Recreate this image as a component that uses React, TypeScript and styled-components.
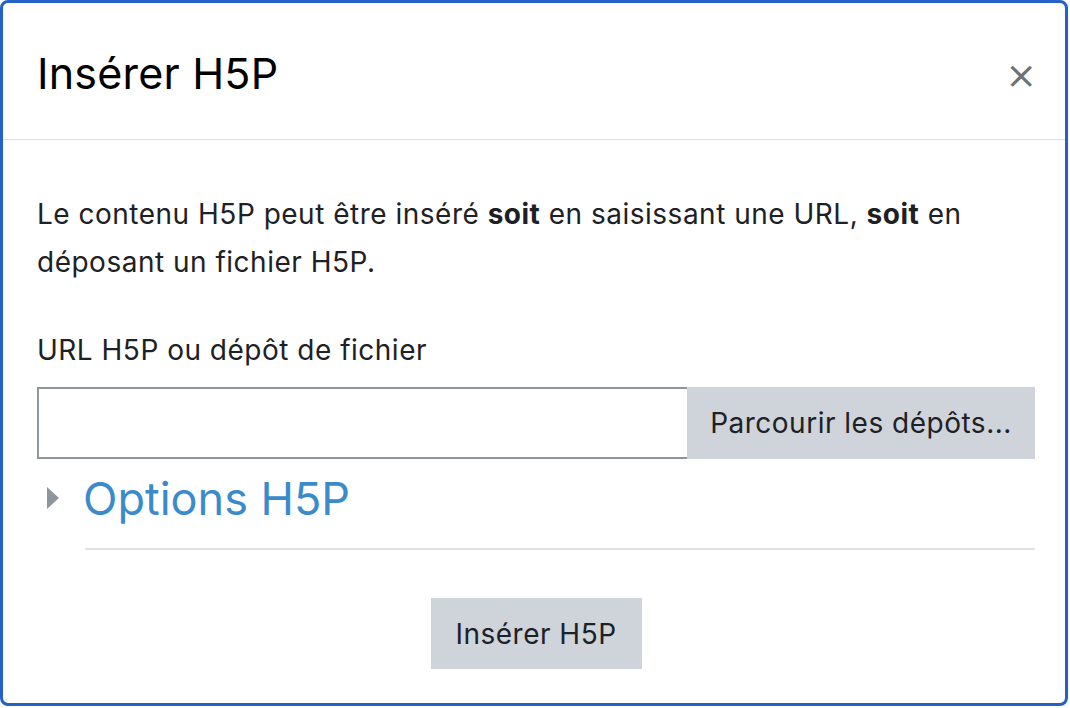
import React from "react";
import styled, { createGlobalStyle } from "styled-components";

const GlobalStyle = createGlobalStyle`
  html, body {
    margin: 0;
    padding: 0;
    background: #fff;
  }
  body {
    font-family: Inter, "Noto Sans", "Liberation Sans", sans-serif;
    color: #1d2125;
  }
  * {
    box-sizing: border-box;
  }
`;

export default function App() {
  return (
    <>
      <GlobalStyle />
      <Modal>
        <Header>
          <Title>Insérer H5P</Title>
          <CloseBtn aria-label="Fermer">×</CloseBtn>
        </Header>
        <Body>
          <Intro>
            Le contenu H5P peut être inséré <b>soit</b> en saisissant une URL,{" "}
            <b>soit</b> en déposant un fichier H5P.
          </Intro>
          <Label>URL H5P ou dépôt de fichier</Label>
          <InputGroup>
            <UrlInput type="text" />
            <GreyButton>Parcourir les dépôts...</GreyButton>
          </InputGroup>
          <OptionsRow>
            <Caret />
            <OptionsLink>Options H5P</OptionsLink>
          </OptionsRow>
          <Divider />
          <Footer>
            <GreyButton $wide>Insérer H5P</GreyButton>
          </Footer>
        </Body>
      </Modal>
    </>
  );
}

const Modal = styled.div`
  width: 1068px;
  height: 706px;
  border: 3px solid #2661c8;
  border-radius: 8px;
  display: flex;
  flex-direction: column;
  background: #fff;
`;

const Header = styled.div`
  height: 137px;
  display: flex;
  align-items: center;
  justify-content: space-between;
  padding: 4px 28px 0 34px;
  border-bottom: 1px solid #dee2e6;
`;

const Title = styled.h5`
  margin: 0;
  font-size: 43px;
  font-weight: 400;
  color: #000;
  letter-spacing: 0.2px;
`;

const CloseBtn = styled.button`
  border: none;
  background: none;
  padding: 0;
  font-family: "DejaVu Sans", sans-serif;
  font-size: 38px;
  line-height: 1;
  color: #6a737b;
  margin-top: 4px;
`;

const Body = styled.div`
  padding: 50px 30px 0 34px;
  display: flex;
  flex-direction: column;
`;

const Intro = styled.p`
  margin: 0;
  font-size: 28px;
  letter-spacing: 0.5px;
  line-height: 48px;
  b {
    font-weight: 700;
  }
`;

const Label = styled.div`
  margin-top: 44px;
  font-size: 28px;
  letter-spacing: 0.5px;
  line-height: 40px;
`;

const InputGroup = styled.div`
  margin-top: 17px;
  display: flex;
  height: 72px;
`;

const UrlInput = styled.input`
  width: 650px;
  height: 100%;
  border: 2px solid #8f959e;
  border-right: none;
  outline: none;
  font-size: 28px;
  padding: 0 16px;
`;

const GreyButton = styled.button<{ $wide?: boolean }>`
  flex: ${(p) => (p.$wide ? "0 0 auto" : "1")};
  width: ${(p) => (p.$wide ? "211px" : "auto")};
  height: ${(p) => (p.$wide ? "71px" : "100%")};
  border: none;
  background: #ced4da;
  color: #1d2125;
  font-family: Inter, "Noto Sans", sans-serif;
  font-size: 28px;
  letter-spacing: 0.5px;
  padding: 0;
`;

const OptionsRow = styled.div`
  display: flex;
  align-items: center;
  height: 78px;
  padding-left: 10px;
  gap: 24px;
`;

const Caret = styled.span`
  width: 0;
  height: 0;
  border-top: 11px solid transparent;
  border-bottom: 11px solid transparent;
  border-left: 12px solid #8f959e;
`;

const OptionsLink = styled.a`
  font-size: 45px;
  color: #3b8bcb;
  text-decoration: none;
  cursor: pointer;
`;

const Divider = styled.hr`
  margin: 11px 0 0 48px;
  border: none;
  border-top: 2px solid #dee2e6;
`;

const Footer = styled.div`
  display: flex;
  justify-content: center;
  margin-top: 48px;
`;
